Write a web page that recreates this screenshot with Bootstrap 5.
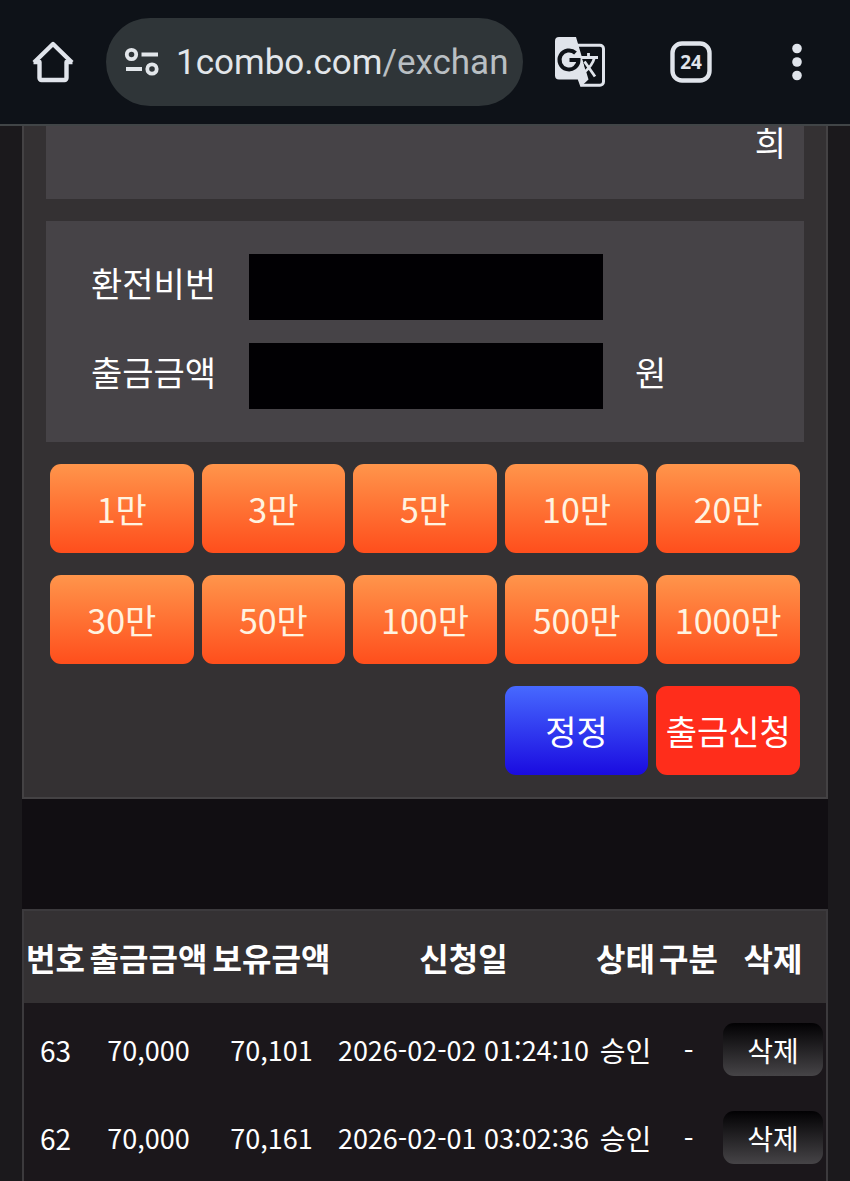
<!DOCTYPE html>
<html lang="ko">
<head>
<meta charset="utf-8">
<meta name="viewport" content="width=device-width, initial-scale=1">
<title>출금신청</title>
<link rel="stylesheet" href="https://cdn.jsdelivr.net/npm/bootstrap@5.3.0/dist/css/bootstrap.min.css">
<style>
  body { background: #1b191c; color: #fff; font-family: "Noto Sans CJK KR", sans-serif; font-size: 34px; line-height: 48px; }
  .browser-bar { background: #0e1218; border-bottom: 2px solid #414547; padding: 18px 0; }
  .bar-icon { background: none; border: 0; color: #e0e4eb; line-height: 0; flex-shrink: 0; }
  .bar-home { width: 106px; }
  .bar-tool { width: 108px; }
  .bar-menu { width: 105px; }
  .bar-translate { width: 114px; }
  .address { background: #2f3538; border: 0; border-radius: 44px; height: 88px; padding: 2px 12px 0 18px; color: #e2e6ea; font-family: Roboto, sans-serif; font-size: 35px; min-width: 0; }
  .address-path { color: #b9bfc3; }
  .page-wrap { margin: 0 22px; }
  .panel { background: #343133; border: 2px solid #444244; border-top: 0; padding: 0 22px 22px; }
  .panel-box { background: #464347; }
  .notice { padding: 0 18px 41px; margin-bottom: 22px; line-height: 32px; }
  .form-box { padding: 33px 45px 33px; margin-bottom: 22px; }
  .form-line + .form-line { margin-top: 23px; }
  .form-line label { width: 158px; line-height: 58px; }
  .form-line span { line-height: 58px; padding-left: 32px; }
  .entry { width: 354px; height: 66px; background: #010003; border: 0; border-radius: 0; color: #fff; padding: 0 16px; }
  .entry:focus { background: #010003; color: #fff; }
  .amounts { display: grid; grid-template-columns: repeat(5, 1fr); gap: 22px 8px; padding: 0 4px; }
  .amount { --bs-btn-border-radius: 11px; border: 0; padding: 20px 0; font-size: 34px; line-height: 49px; color: #fff3e0; background: linear-gradient(#ff954b, #ff4e1c); white-space: nowrap; }
  .amount-reset { grid-column: 4; color: #fff; background: linear-gradient(#4769ff, #1a0be0); }
  .amount-submit { color: #fff; background: #ff2d1b; }
  .history { background: #110e12; padding-top: 110px; }
  .history-box { border: 2px solid #3c3a3d; border-bottom: 0; background: #1b171b; padding-bottom: 2px; }
  .history-table { table-layout: fixed; width: 100%; text-align: center; white-space: nowrap; }
  .history-table th { background: #343133; font-size: 32px; line-height: 48px; padding: 22px 0; font-weight: 700; }
  .history-table td { font-size: 28px; line-height: 54px; padding: 20px 0 14px; vertical-align: top; }
  .history-table .figure-cell { font-size: 27px; }
  .c-short { width: 63px; }
  .c-money { width: 123px; }
  .c-action { width: 106px; }
  .remove { display: block; width: 100px; margin: 0 auto; border: 0; --bs-btn-border-radius: 11px; padding: 1px 0 0; font-size: 28px; line-height: 52px; color: #fff; background: linear-gradient(#020103, #464447); }
</style>
</head>
<body>
<header class="browser-bar d-flex align-items-center">
  <button type="button" class="bar-icon bar-home p-0" aria-label="홈">
    <svg width="42" height="42" viewBox="0 0 42 42" fill="none" stroke="currentColor" stroke-width="4.4" stroke-linejoin="round" stroke-linecap="butt"><path d="M1.500 21h6V37a2 2 0 0 0 2 2h23a2 2 0 0 0 2-2V21h6M2 21.500 21 3l19 18.500"/></svg>
  </button>
  <button type="button" class="address d-flex align-items-center flex-grow-1">
    <svg class="flex-shrink-0 me-3" width="36" height="32" viewBox="0 0 36 32" fill="none" stroke="currentColor" stroke-width="3.8"><circle cx="7.500" cy="7.500" r="4.700"/><path d="M17.500 7.500H34M2 22h16"/><circle cx="28" cy="22" r="4.700"/></svg>
    <span class="text-nowrap">1combo.com<span class="address-path">/exchan</span></span>
  </button>
  <button type="button" class="bar-icon bar-translate p-0" aria-label="번역">
    <svg width="50" height="50" viewBox="0 0 50 50" fill="none"><path d="M22 8.300h23a3.500 3.500 0 0 1 3.500 3.500v33a3.500 3.500 0 0 1-3.500 3.500H26" stroke="currentColor" stroke-width="3"/><path d="M4 0h17l12.500 42.500L25.500 50l-2.700-7.500H4a4 4 0 0 1-4-4V4a4 4 0 0 1 4-4Z" fill="currentColor"/><path d="M20.500 16A9.500 9.500 0 1 0 23.500 23h-9" stroke="#0e1218" stroke-width="4"/><path d="M27 20.500h2l6 9.500-4 5.500Z" fill="#0e1218"/><path d="M26 20.500h17M33.500 16v4.500M39.500 20.500c-1.500 6-5.500 11-11 15.500M29.500 24.500l10.500 15" stroke="currentColor" stroke-width="2.800"/></svg>
  </button>
  <button type="button" class="bar-icon bar-tool p-0" aria-label="탭 24개">
    <svg width="42" height="42" viewBox="0 0 42 42"><rect x="2.500" y="2.500" width="37" height="37" rx="9.500" fill="none" stroke="currentColor" stroke-width="4.400"/><text x="21" y="27.500" text-anchor="middle" font-family="Open Sans, sans-serif" font-size="19" font-weight="700" fill="currentColor">24</text></svg>
  </button>
  <button type="button" class="bar-icon bar-menu p-0" aria-label="메뉴">
    <svg width="12" height="38" viewBox="0 0 12 38" fill="currentColor"><circle cx="5" cy="5.500" r="4.800"/><circle cx="5" cy="19" r="4.800"/><circle cx="5" cy="32.500" r="4.800"/></svg>
  </button>
</header>

<main class="page-wrap">
  <section class="panel">
    <div class="panel-box notice text-end">희</div>
    <form>
      <div class="panel-box form-box">
        <div class="form-line d-flex">
          <label for="pin">환전비번</label>
          <input type="password" id="pin" class="entry">
        </div>
        <div class="form-line d-flex">
          <label for="money">출금금액</label>
          <input type="text" id="money" class="entry">
          <span>원</span>
        </div>
      </div>
      <div class="amounts">
        <button type="button" class="btn amount">1만</button>
        <button type="button" class="btn amount">3만</button>
        <button type="button" class="btn amount">5만</button>
        <button type="button" class="btn amount">10만</button>
        <button type="button" class="btn amount">20만</button>
        <button type="button" class="btn amount">30만</button>
        <button type="button" class="btn amount">50만</button>
        <button type="button" class="btn amount">100만</button>
        <button type="button" class="btn amount">500만</button>
        <button type="button" class="btn amount">1000만</button>
        <button type="reset" class="btn amount amount-reset">정정</button>
        <button type="submit" class="btn amount amount-submit">출금신청</button>
      </div>
    </form>
  </section>

  <section class="history">
    <div class="history-box">
      <table class="history-table">
        <colgroup><col class="c-short"><col class="c-money"><col class="c-money"><col><col class="c-short"><col class="c-short"><col class="c-action"></colgroup>
        <thead>
          <tr><th>번호</th><th>출금금액</th><th>보유금액</th><th>신청일</th><th>상태</th><th>구분</th><th>삭제</th></tr>
        </thead>
        <tbody>
          <tr><td>63</td><td class="figure-cell">70,000</td><td class="figure-cell">70,101</td><td class="figure-cell">2026-02-02 01:24:10</td><td>승인</td><td>-</td><td><button type="button" class="btn remove">삭제</button></td></tr>
          <tr><td>62</td><td class="figure-cell">70,000</td><td class="figure-cell">70,161</td><td class="figure-cell">2026-02-01 03:02:36</td><td>승인</td><td>-</td><td><button type="button" class="btn remove">삭제</button></td></tr>
        </tbody>
      </table>
    </div>
  </section>
</main>
<script src="https://cdn.jsdelivr.net/npm/bootstrap@5.3.0/dist/js/bootstrap.bundle.min.js"></script>
</body>
</html>
